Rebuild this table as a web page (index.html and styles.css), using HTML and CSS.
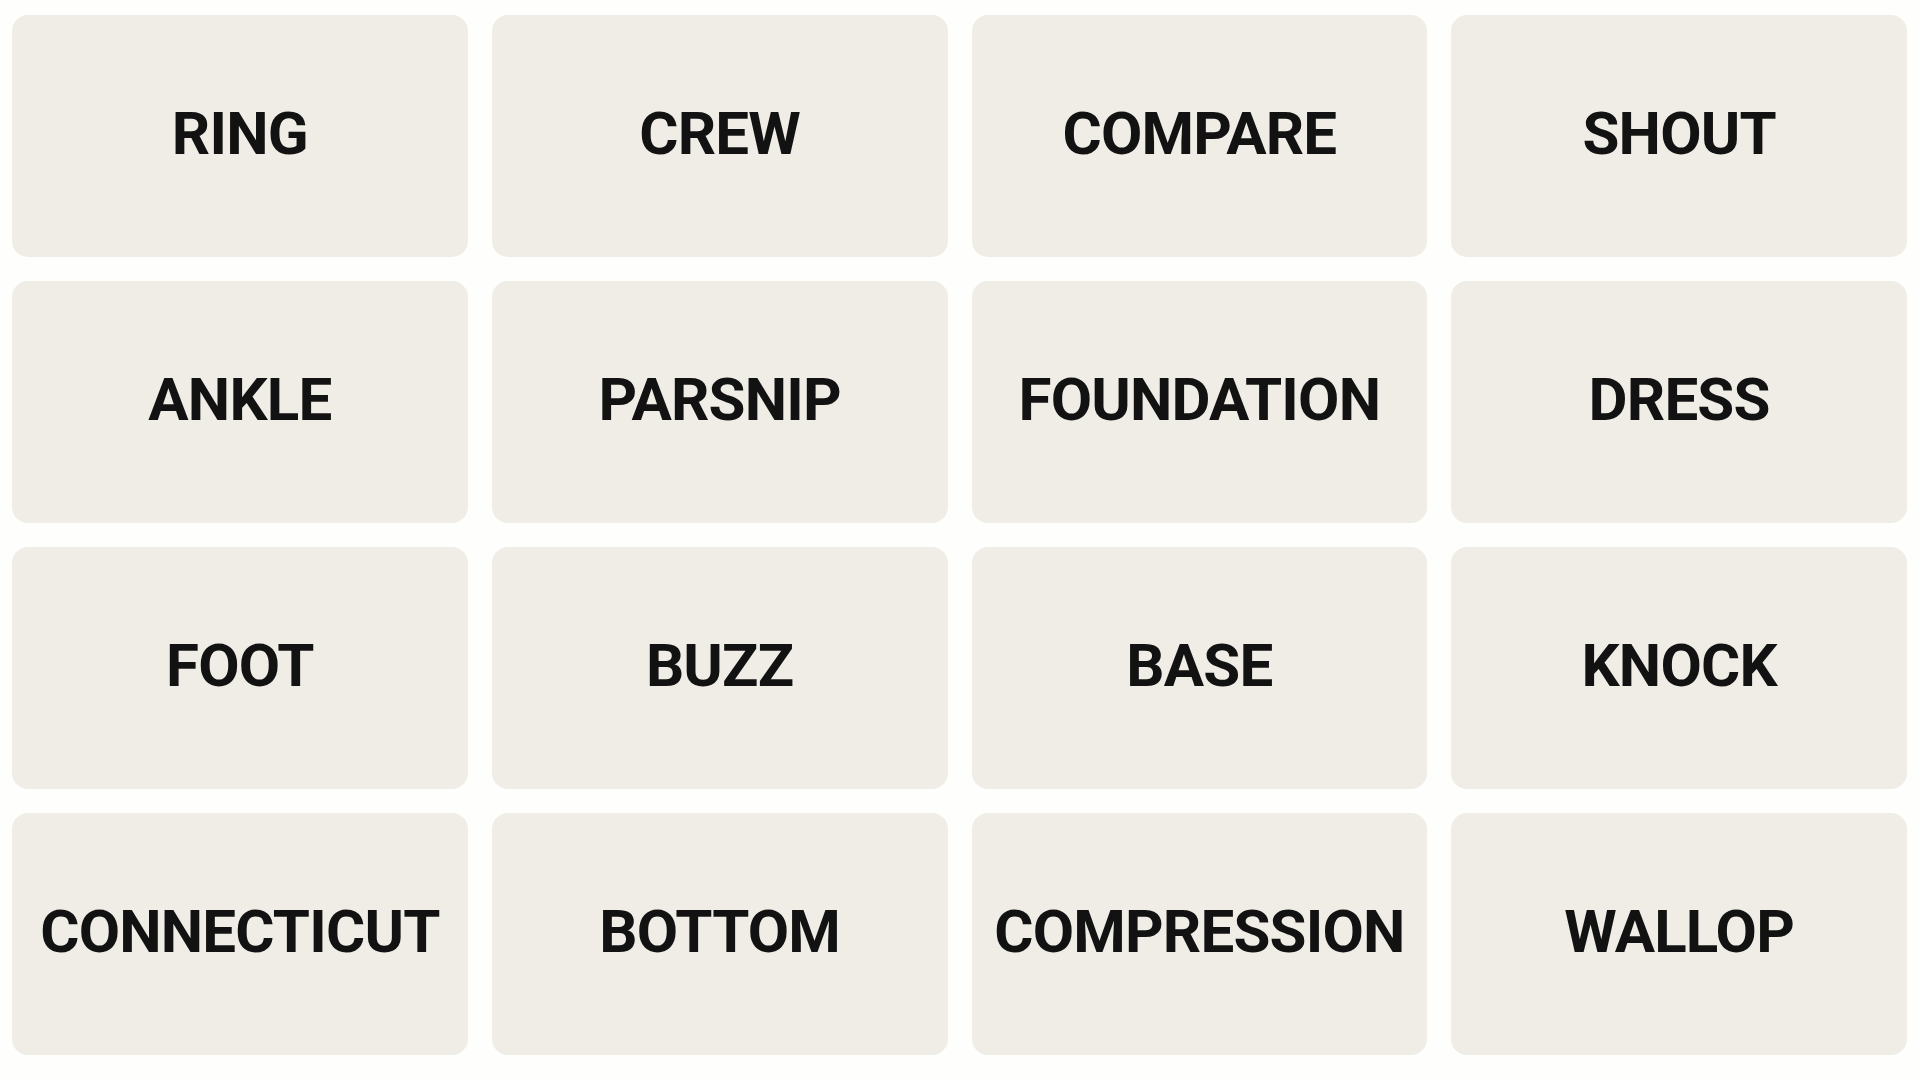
FILE: index.html
```html
<!DOCTYPE html>
<html>
<head>
<meta charset="utf-8">
<link rel="stylesheet" href="styles.css">
</head>
<body>
<div class="board">
  <div class="tile">RING</div>
  <div class="tile">CREW</div>
  <div class="tile">COMPARE</div>
  <div class="tile">SHOUT</div>
  <div class="tile">ANKLE</div>
  <div class="tile">PARSNIP</div>
  <div class="tile">FOUNDATION</div>
  <div class="tile">DRESS</div>
  <div class="tile">FOOT</div>
  <div class="tile">BUZZ</div>
  <div class="tile">BASE</div>
  <div class="tile">KNOCK</div>
  <div class="tile">CONNECTICUT</div>
  <div class="tile">BOTTOM</div>
  <div class="tile">COMPRESSION</div>
  <div class="tile">WALLOP</div>
</div>
</body>
</html>
```
FILE: styles.css
```css
html, body {
  margin: 0;
  padding: 0;
  background: #fefefc;
}
body {
  padding: 15px 13px 0 12px;
}
.board {
  display: grid;
  grid-template-columns: repeat(4, 1fr);
  grid-auto-rows: 242px;
  gap: 24px;
}
.tile {
  background: #efede6;
  border-radius: 16px;
  display: flex;
  align-items: center;
  justify-content: center;
  font-family: Roboto, "Liberation Sans", sans-serif;
  font-weight: 700;
  font-size: 60px;
  letter-spacing: -0.8px;
  color: #121212;
  padding-bottom: 6px;
  box-sizing: border-box;
}
```
